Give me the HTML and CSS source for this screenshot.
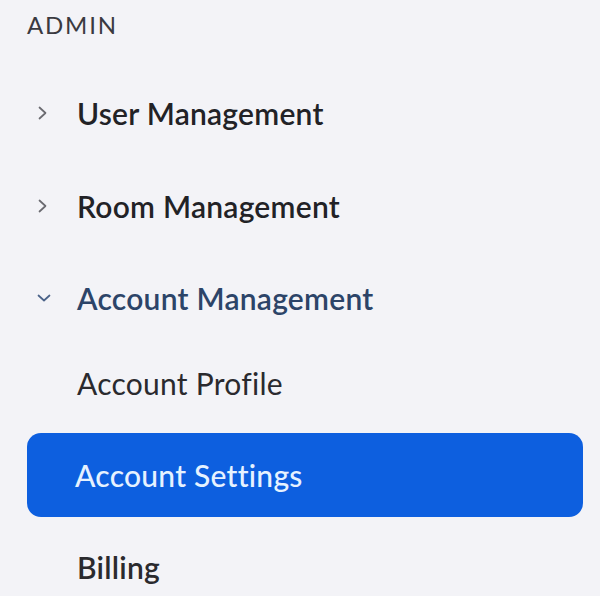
FILE: index.html
```html
<!DOCTYPE html>
<html>
<head>
<meta charset="utf-8">
<link rel="stylesheet" href="styles.css">
</head>
<body>
<nav class="sidebar">
  <div class="section-title">ADMIN</div>
  <ul class="menu">
    <li class="group">
      <span class="chev"><svg width="16" height="14" viewBox="0 0 16 14"><path d="M3.5 1.5 L9.5 7 L3.5 12.5" fill="none" stroke="#6a6a70" stroke-width="1.7" stroke-linecap="round" stroke-linejoin="round"/></svg></span>
      <span class="label">User Management</span>
    </li>
    <li class="group">
      <span class="chev"><svg width="16" height="14" viewBox="0 0 16 14"><path d="M3.5 1.5 L9.5 7 L3.5 12.5" fill="none" stroke="#6a6a70" stroke-width="1.7" stroke-linecap="round" stroke-linejoin="round"/></svg></span>
      <span class="label">Room Management</span>
    </li>
    <li class="group open">
      <span class="chev"><svg width="16" height="14" viewBox="0 0 16 14"><path d="M2.5 4.5 L8 9.5 L13.5 4.5" fill="none" stroke="#4a6288" stroke-width="1.7" stroke-linecap="round" stroke-linejoin="round"/></svg></span>
      <span class="label">Account Management</span>
    </li>
    <li class="sub">Account Profile</li>
    <li class="sub active">Account Settings</li>
    <li class="sub billing">Billing</li>
  </ul>
</nav>
</body>
</html>
```

FILE: styles.css
```css
html, body {
  margin: 0;
  padding: 0;
  background: #f3f3f7;
}
body {
  font-family: Lato, "Open Sans", sans-serif;
  width: 600px;
  height: 596px;
  overflow: hidden;
}
.sidebar {
  padding: 9px 17px 0 27px;
}
.section-title {
  font-size: 24px;
  color: #3a3a40;
  letter-spacing: 1.8px;
  line-height: 32px;
  height: 32px;
}
.menu {
  list-style: none;
  margin: 0;
  padding: 0;
  margin-top: 25px;
  display: flex;
  flex-direction: column;
}
.group {
  display: flex;
  align-items: center;
  height: 93px;
  box-sizing: border-box;
}
.group.open {
  height: 89px;
  padding-top: 3px;
}
.chev {
  width: 50px;
  display: flex;
  padding-left: 9px;
  box-sizing: border-box;
}
.label {
  font-size: 30px;
  font-weight: 600;
  color: #222226;
  letter-spacing: 0.25px;
}
.open .label {
  color: #2c4468;
}
.sub {
  font-size: 30px;
  color: #2a2a2e;
  height: 84px;
  display: flex;
  align-items: center;
  padding-left: 50px;
  letter-spacing: 0.25px;
}
.sub + .sub {
  margin-top: 8px;
}
.sub.active {
  background: #0d5fdf;
  color: #e6f2ff;
  border-radius: 14px;
  font-weight: 500;
  padding-left: 48px;
}
.billing {
  font-weight: 600;
}
```
